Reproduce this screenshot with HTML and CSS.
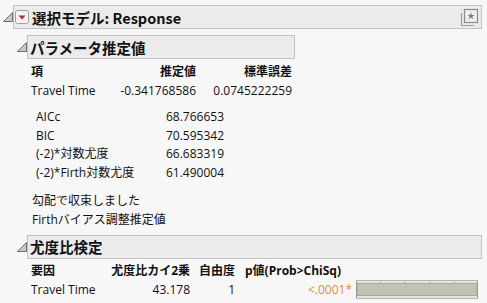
FILE: index.html
```html
<!DOCTYPE html>
<html lang="ja">
<head>
<meta charset="utf-8">
<link rel="stylesheet" href="styles.css">
</head>
<body>
<div class="report">
  <div class="head-row lvl1">
    <svg class="tri" width="10" height="10" viewBox="0 0 10 10"><path d="M9.5 0.5 L9.5 9.5 L0.5 9.5 Z" fill="#c8c8c8" stroke="#6e6e6e" stroke-width="1"/></svg>
    <div class="head-box main">
      <span class="menu-btn"><svg width="14" height="14" viewBox="0 0 14 14"><rect x="0.5" y="0.5" width="13" height="13" rx="2" fill="#f4f4f4" stroke="#a0a0a0"/><path d="M3.5 5.5 L10.5 5.5 L7 9.5 Z" fill="#d81e1e"/></svg></span>
      <span class="title">選択モデル: Response</span>
      <svg class="star" width="19" height="19" viewBox="0 0 19 19"><path d="M1.5 5 L1.5 17.5 L14 17.5" fill="none" stroke="#9a9a9a" stroke-width="1.2"/><rect x="4.5" y="1.5" width="13" height="13" fill="#eeeeee" stroke="#8a8a8a" stroke-width="1.2"/><path d="M11 4.2 L11.9 6.9 L14.6 6.9 L12.4 8.5 L13.2 11.2 L11 9.6 L8.8 11.2 L9.6 8.5 L7.4 6.9 L10.1 6.9 Z" fill="#7a7a7a"/></svg>
    </div>
  </div>

  <div class="section">
    <div class="head-row lvl2">
      <svg class="tri" width="10" height="10" viewBox="0 0 10 10"><path d="M9.5 0.5 L9.5 9.5 L0.5 9.5 Z" fill="#c8c8c8" stroke="#6e6e6e" stroke-width="1"/></svg>
      <div class="head-box sub narrow"><span class="subtitle">パラメータ推定値</span></div>
    </div>
    <div class="content">
      <div class="grid est">
        <div class="th l">項</div><div class="th r">推定値</div><div class="th r">標準誤差</div>
        <div class="l">Travel Time</div><div class="r">-0.341768586</div><div class="r">0.0745222259</div>
      </div>
      <div class="grid stats">
        <div class="l">AICc</div><div class="r">68.766653</div>
        <div class="l">BIC</div><div class="r">70.595342</div>
        <div class="l">(-2)*対数尤度</div><div class="r">66.683319</div>
        <div class="l">(-2)*Firth対数尤度</div><div class="r">61.490004</div>
      </div>
      <div class="msgs">
        <div class="msg">勾配で収束しました</div>
        <div class="msg">Firthバイアス調整推定値</div>
      </div>
    </div>
  </div>

  <div class="section">
    <div class="head-row lvl2">
      <svg class="tri" width="10" height="10" viewBox="0 0 10 10"><path d="M9.5 0.5 L9.5 9.5 L0.5 9.5 Z" fill="#c8c8c8" stroke="#6e6e6e" stroke-width="1"/></svg>
      <div class="head-box sub wide"><span class="subtitle">尤度比検定</span></div>
    </div>
    <div class="content">
      <div class="grid lr">
        <div class="th l">要因</div><div class="th r">尤度比カイ2乗</div><div class="th r">自由度</div><div class="th l pcol">p値(Prob&gt;ChiSq)</div><div></div>
        <div class="l">Travel Time</div><div class="r">43.178</div><div class="r">1</div><div class="r orange">&lt;.0001*</div>
        <div class="bar"><svg width="126" height="19" viewBox="0 0 126 19"><rect x="0.5" y="0.5" width="125" height="18" fill="#ffffff" stroke="#9c9c90"/><path d="M25.5 1 V3 M50.5 1 V3 M76.5 1 V3 M101.5 1 V3" stroke="#b8b8b0"/><rect x="1" y="3" width="124" height="13" fill="#c2c2b7" stroke="#9c9c90" stroke-width="1"/></svg></div>
      </div>
    </div>
  </div>
</div>
</body>
</html>
```

FILE: styles.css
```css
html, body {
  margin: 0;
  padding: 0;
  background: #f7f7f7;
}
body {
  font-family: "Open Sans", "Noto Sans CJK JP", sans-serif;
  font-size: 12px;
  color: #111;
  width: 487px;
  height: 303px;
  overflow: hidden;
}
.report {
  padding-top: 5px;
}
.head-row {
  display: flex;
  align-items: center;
}
.lvl1 {
  padding-left: 3px;
}
.lvl2 {
  padding-left: 17px;
}
.tri {
  flex: none;
  width: 10px;
  height: 10px;
}
.head-box {
  box-sizing: border-box;
  background: #ebebeb;
  border: 1px solid #c2c2c2;
  display: flex;
  align-items: center;
  height: 24px;
}
.main {
  width: 469px;
  padding-left: 1px;
  padding-right: 2px;
}
.menu-btn {
  display: flex;
  margin-right: 3px;
}
.title {
  font-family: "Noto Sans CJK JP", sans-serif;
  font-weight: bold;
  font-size: 14.5px;
  flex: 1;
}
.star {
  flex: none;
}
.section {
  margin-top: 6px;
}
.sub {
  padding-left: 2px;
}
.narrow { width: 268px; }
.wide { width: 455px; }
.subtitle {
  font-family: "Noto Sans CJK JP", sans-serif;
  font-weight: bold;
  font-size: 14.5px;
}
.content {
  padding-left: 31px;
}
.grid {
  display: grid;
  line-height: 19px;
  white-space: nowrap;
}
.th {
  font-weight: bold;
}
.l { text-align: left; }
.r { text-align: right; }
.est {
  grid-template-columns: 85px 80px 96px;
  margin-top: 3px;
}
.stats {
  grid-template-columns: 120px 68px;
  padding-left: 5px;
  margin-top: 8px;
  line-height: 18.7px;
}
.msgs {
  margin-top: 8px;
  line-height: 19px;
  padding-left: 1px;
}
.lr {
  grid-template-columns: 79px 80px 45px 117px 126px;
  margin-top: 2px;
  align-items: center;
}
.pcol {
  padding-left: 10px;
}
.orange {
  color: #ec8a2c;
}
.bar {
  display: flex;
  margin-left: 4px;
}
```
